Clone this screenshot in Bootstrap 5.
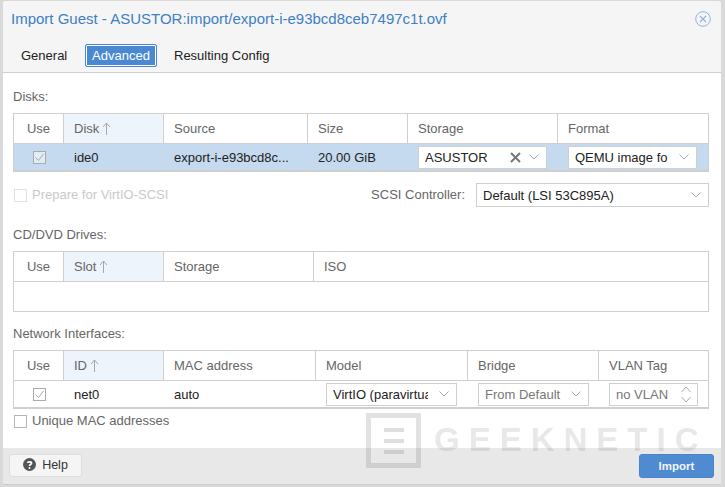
<!DOCTYPE html>
<html lang="en"><head><meta charset="utf-8"><title>Import Guest</title>
<link href="https://cdn.jsdelivr.net/npm/bootstrap@5.3.0/dist/css/bootstrap.min.css" rel="stylesheet">
<style>
html,body{height:100%}
body{margin:0;background:#d9d9d9;font-family:"Liberation Sans",Arial,sans-serif;font-size:13px;color:#666;overflow:hidden}
.dlg{position:relative;width:718px;height:484px;margin:1px 0 0 3px;background:#fff;border-radius:3px 3px 0 0;display:flex;flex-direction:column;overflow:hidden}
.dlg-top{background:#f5f5f5;height:72px;border-bottom:1px solid #cfcfcf;flex:none}
.dlg-title{height:35px;padding:0 0 0 8px;font-size:15px;color:#3e80c4;line-height:35px}
.dlg-close{width:16px;height:16px;margin-right:10px}
.tabs{padding-left:4px;gap:0;margin-top:8px}
.tab-i{font-size:13px;line-height:21px;height:23px;color:#222;padding:0;text-decoration:none;background:none;border:1px solid transparent}
.tab-1{width:48px;margin:0 17px 0 13px;text-align:left}
.tab-2{width:72px;margin-right:16px;background:#4a89d1;color:#fff;border-radius:2px;box-shadow:inset 0 0 0 1px #fff;border-color:#4a89d1;text-align:center}
.dlg-main{flex:1;padding:0 12px 0 10px;min-height:0}
.sec{font-size:13px;height:17px;line-height:17px;color:#666}
.sec-1{margin-top:15px;margin-bottom:8px}
.sec-2{margin-top:19px;margin-bottom:8px}
.sec-3{margin-top:13px;margin-bottom:8px}
.grid{table-layout:fixed;width:696px;margin:0;border-color:#cfcfcf;font-size:13px;border-collapse:separate;border-spacing:0;border:1px solid #cfcfcf}
.grid th,.grid td{padding:0 0 0 10px;border:0;vertical-align:middle;font-weight:400;background:transparent;box-shadow:none;white-space:nowrap;overflow:hidden}
.grid th{height:30px;color:#666;border-right:1px solid #cfcfcf;border-bottom:1px solid #cfcfcf;font-size:13px}
.grid th:last-child{border-right:0}
.grid th.cen,.grid td.cen{padding:0;text-align:center}
.grid th.sorted{background:#eef4fb}
.grid td{height:26px;color:#222;padding-left:10px;font-size:13px}
.grid td.txt{padding-top:2px}
.grid .emp{height:29px}
.grid .pick td{background:#c5d9ef}
.grid-1{border-bottom-width:2px}
.grid-3{border-bottom-width:2px}
.arrow{width:9px;height:14px;margin-left:3px;vertical-align:-3px}
.tick{width:13px;height:13px;display:block;margin:0 auto}
.fld{display:block;height:23px;padding:0 28px 0 6px;font-size:13px;line-height:21px;border:1px solid #cfcfcf;border-radius:0;color:#222;background-color:#fff;
background-image:url("data:image/svg+xml,%3Csvg xmlns='http://www.w3.org/2000/svg' width='10' height='6'%3E%3Cpath d='M.5.5 5 5 9.500.5' fill='none' stroke='%23a9a9a9'/%3E%3C/svg%3E");background-repeat:no-repeat;background-position:right 7px center;background-size:10px 6px;box-shadow:none}
.fld-w1{width:129px}
.fld-w2{width:131px}
.fld-w3{width:111px;padding-right:22px}
.fld-dim{color:#777}
.fld-spin{width:89px;height:23px;border:1px solid #cfcfcf;padding:0 6px;line-height:21px;color:#777;font-size:13px;background:#fff}
.clr{position:absolute;right:26px;top:6px;width:11px;height:11px}
.relbox{position:relative;width:129px}
.optrow{height:24px;margin-top:11px}
.box{width:13px;height:13px;border:1px solid #b5b5b5;background:#fff;flex:none;margin-left:1px;margin-right:5px}
.box-dis{border-color:#e2e2e2}
.dim-t{color:#c9c9c9;font-size:13px}
.scsi-l{font-size:13px;color:#666}
.fld-scsi{width:233px;height:24px;margin-left:11px;padding-left:6px;font-size:13px}
.lab{color:#666;font-size:13px}
.opt2{margin-top:4px;height:16px}
.dlg-foot{height:37px;background:#e8e8e8;padding:6px 7px 0 6px;flex:none;border-bottom:1px solid #ccc}
.btn-h{width:73px;height:23px;background:#f5f5f5;border:1px solid #ddd;border-radius:3px;padding:0;font-size:12.5px;color:#333;line-height:21px}
.btn-h svg{width:13px;height:13px;vertical-align:-2px;margin-right:6px}
.btn-i{width:75px;height:24px;background:#4f8bd0;border:1px solid #4a85c8;border-radius:3px;padding:0;font-size:11.5px;font-weight:700;color:#f0f5fb;line-height:22px}
.wm{position:absolute;left:363px;top:412px;display:flex;align-items:center;pointer-events:none;color:rgba(110,110,110,.17)}
.wm-box{width:55px;height:55px;border:5px solid rgba(110,110,110,.2);display:flex;flex-direction:column;align-items:center;justify-content:center;gap:7px}
.wm-box i{display:block;width:20px;height:4px;background:rgba(110,110,110,.22)}
.wm-t{font:700 33px/1 "Liberation Sans",sans-serif;letter-spacing:9px;margin-left:13px;margin-top:-2px}
</style></head><body>
<div class="dlg">
 <div class="dlg-top">
  <div class="dlg-title d-flex justify-content-between align-items-center"><span>Import Guest - ASUSTOR:import/export-i-e93bcd8ceb7497c1t.ovf</span>
   <svg class="dlg-close" viewBox="0 0 16 16"><circle cx="8" cy="8" r="7.300" fill="none" stroke="#8fb4da"/><path d="M5 5l6 6M11 5l-6 6" stroke="#8fb4da" stroke-width="1.100"/></svg></div>
  <div class="tabs d-flex"><a class="tab-i tab-1">General</a><a class="tab-i tab-2">Advanced</a><a class="tab-i">Resulting Config</a></div>
 </div>
 <div class="dlg-main">
  <div class="sec sec-1">Disks:</div>
  <table class="table grid grid-1">
   <colgroup><col style="width:50px"><col style="width:100px"><col style="width:144px"><col style="width:100px"><col style="width:150px"><col></colgroup>
   <thead><tr><th class="cen">Use</th><th class="sorted">Disk<svg class="arrow" viewBox="0 0 9 14"><path d="M4.500 13V1M1 5l3.500-4L8 5" fill="none" stroke="#a8a8a8"/></svg></th><th>Source</th><th>Size</th><th>Storage</th><th>Format</th></tr></thead>
   <tbody><tr class="pick"><td class="cen"><svg class="tick" viewBox="0 0 13 13"><rect x=".5" y=".5" width="12" height="12" fill="#fff" fill-opacity=".5" stroke="#aaa"/><path d="M2.500 6.500l3 3 5-6.500" fill="none" stroke="#aaa"/></svg></td><td class="txt">ide0</td><td class="txt">export-i-e93bcd8c...</td><td class="txt">20.00 GiB</td>
    <td><div class="relbox"><select class="form-select fld fld-w1"><option>ASUSTOR</option></select><svg class="clr" viewBox="0 0 11 11"><path d="M1 1l9 9M10 1l-9 9" stroke="#777" stroke-width="2"/></svg></div></td>
    <td><select class="form-select fld fld-w1"><option>QEMU image format</option></select></td></tr></tbody>
  </table>
  <div class="optrow d-flex align-items-center">
   <span class="box box-dis"></span><span class="dim-t">Prepare for VirtIO-SCSI</span>
   <span class="scsi-l ms-auto">SCSI Controller:</span>
   <select class="form-select fld fld-scsi"><option>Default (LSI 53C895A)</option></select>
  </div>
  <div class="sec sec-2">CD/DVD Drives:</div>
  <table class="table grid">
   <colgroup><col style="width:50px"><col style="width:100px"><col style="width:150px"><col></colgroup>
   <thead><tr><th class="cen">Use</th><th class="sorted">Slot<svg class="arrow" viewBox="0 0 9 14"><path d="M4.500 13V1M1 5l3.500-4L8 5" fill="none" stroke="#a8a8a8"/></svg></th><th>Storage</th><th>ISO</th></tr></thead>
   <tbody><tr><td class="emp" colspan="4"></td></tr></tbody>
  </table>
  <div class="sec sec-3">Network Interfaces:</div>
  <table class="table grid grid-3">
   <colgroup><col style="width:50px"><col style="width:100px"><col style="width:152px"><col style="width:152px"><col style="width:131px"><col></colgroup>
   <thead><tr><th class="cen">Use</th><th class="sorted">ID<svg class="arrow" viewBox="0 0 9 14"><path d="M4.500 13V1M1 5l3.500-4L8 5" fill="none" stroke="#a8a8a8"/></svg></th><th>MAC address</th><th>Model</th><th>Bridge</th><th>VLAN Tag</th></tr></thead>
   <tbody><tr><td class="cen"><svg class="tick" viewBox="0 0 13 13"><rect x=".5" y=".5" width="12" height="12" fill="#fff" stroke="#aaa"/><path d="M2.500 6.500l3 3 5-6.500" fill="none" stroke="#aaa"/></svg></td><td class="txt">net0</td><td class="txt">auto</td>
    <td><select class="form-select fld fld-w2"><option>VirtIO (paravirtualized)</option></select></td>
    <td><select class="form-select fld fld-w3 fld-dim"><option>From Default</option></select></td>
    <td><div class="fld-spin d-flex justify-content-between align-items-center"><span>no VLAN</span><svg width="10" height="17" viewBox="0 0 10 17"><path d="M.5 6 5 1l4.500 5M.5 11 5 16l4.500-5" fill="none" stroke="#a9a9a9"/></svg></div></td></tr></tbody>
  </table>
  <div class="opt2 d-flex align-items-center"><span class="box"></span><span class="lab">Unique MAC addresses</span></div>
 </div>
 <div class="dlg-foot d-flex justify-content-between align-items-start">
  <button class="btn btn-h" type="button"><svg viewBox="0 0 14 14"><circle cx="7" cy="7" r="7" fill="#555"/><path d="M4.800 5.300C5 3.800 9.200 3.600 9.200 5.600 9.200 7 7 7 7 8.500" fill="none" stroke="#fff" stroke-width="1.700"/><circle cx="7" cy="10.800" r="1" fill="#fff"/></svg>Help</button>
  <button class="btn btn-i" type="button">Import</button>
 </div>
 <div class="wm"><div class="wm-box"><i></i><i></i><i></i></div><div class="wm-t">GEEKNETIC</div></div>
</div>
<script src="https://cdn.jsdelivr.net/npm/bootstrap@5.3.0/dist/js/bootstrap.bundle.min.js"></script>
</body></html>
